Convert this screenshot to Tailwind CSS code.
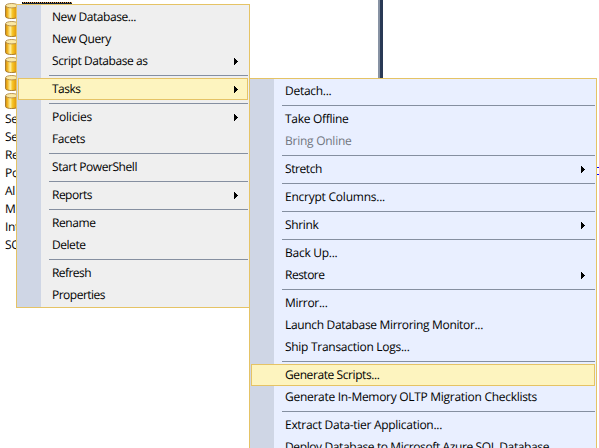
<!DOCTYPE html>
<html lang="en"><head><meta charset="utf-8"><title>Database menu</title>
<script src="https://cdn.jsdelivr.net/npm/@tailwindcss/browser@4"></script></head>
<body class="relative h-[448px] w-[599px] overflow-hidden bg-white font-['Open_Sans','Noto_Sans',sans-serif] text-[12px] text-black [text-rendering:geometricPrecision]">
<svg class="absolute h-0 w-0"><defs>
<linearGradient id="g"><stop offset="0" stop-color="#d08a10"/><stop offset=".15" stop-color="#efb21c"/><stop offset=".38" stop-color="#fff0a0"/><stop offset=".55" stop-color="#f7c628"/><stop offset="1" stop-color="#d98500"/></linearGradient>
<symbol id="db" viewBox="0 0 14 18"><path d="M.5 4v10.500c0 2.700 12.500 2.700 12.500 0V4z" fill="url(#g)" stroke="#a07428" stroke-width=".9"/><ellipse cx="6.750" cy="3.700" rx="6.200" ry="2.200" fill="#fbe9a4" stroke="#b08a48" stroke-width=".9"/></symbol>
<symbol id="ar" viewBox="0 0 4 7"><path d="M0 0h1v1h1v1h1v1h1v1H3v1H2v1H1v1H0z" shape-rendering="crispEdges"/></symbol></defs></svg>
<main class="flex h-full">
<aside class="w-[378px] pl-[5px]" id="tree"></aside>
<div class="h-full w-[2px] bg-[#8792a3]"></div><div class="h-full w-[3px] bg-[#293955]"></div>
</main>
<div class="absolute left-[22px] top-[2px] h-[2px] w-[50px] bg-[#10243c]"><div class="h-px bg-[repeating-linear-gradient(90deg,#000_0_1px,#e09a50_1px_2px)]"></div></div>
<div class="absolute left-[592px] top-[167px] h-[8px] w-[7px] border-y border-[#0000ff]"></div>
<nav id="menu" class="absolute left-[16px] top-[4px] h-[304px] w-[234px] border border-[#e5c365] bg-[linear-gradient(90deg,#cfd6e5_24px,#efefef_24px)] pt-px"></nav>
<nav id="sub" class="absolute left-[249px] top-[78px] h-[370px] w-[348px] overflow-hidden border border-b-0 border-[#e5c365] bg-[linear-gradient(90deg,#cfd6e5_24px,#e9efff_24px)] pt-px"></nav>
<script>
const arrow = '<svg class="mr-[9px] ml-auto h-[7px] w-[4px]"><use href="#ar"/></svg>';
// Each entry: label, label width, flags (a = arrow, h = highlighted, d = disabled); null is a separator
const main = [['New Database...',84],['New Query',59],['Script Database as',95.5,'a'],null,['Tasks',28.5,'ah'],null,['Policies',40,'a'],['Facets',33],null,['Start PowerShell',85],null,['Reports',40,'a'],null,['Rename',43.5],['Delete',33.5],null,['Refresh',39],['Properties',53]];
const sub = [['Detach...',46.5],null,['Take Offline',63.5],['Bring Online',66.5,'d'],null,['Stretch',37,'a'],null,['Encrypt Columns...',100],null,['Shrink',33.5,'a'],null,['Back Up...',52.5],['Restore',39.5,'a'],null,['Mirror...',42.5],['Launch Database Mirroring Monitor...',198],['Ship Transaction Logs...',124.5],null,['Generate Scripts...',94.5,'h'],['Generate In-Memory OLTP Migration Checklists',252],null,['Extract Data-tier Application...',157],['Deploy Database to Microsoft Azure SQL Database',264]];
function fill(id, rows) {
  document.getElementById(id).innerHTML = rows.map(r => {
    if (!r) return '<div class="ml-[32px] mr-px flex h-[6px] items-center"><div class="mt-px h-px w-full bg-[#858fa0]"></div></div>';
    const f = r[2] || '';
    return `<div class="mx-px flex h-[22px] items-center border pl-[33px] ${f.includes('h') ? 'border-[#e5c365] bg-[#fdf4bf]' : 'border-transparent'} ${f.includes('d') ? 'text-[#717680]' : ''}"><span class="whitespace-nowrap leading-[20px]" data-w="${r[1]}">${r[0]}</span>${f.includes('a') ? arrow : ''}</div>`;
  }).join('');
}
fill('menu', main); fill('sub', sub);
function fit() {
  document.querySelectorAll('[data-w]').forEach(e => {
    e.style.letterSpacing = '0px';
    e.style.letterSpacing = (e.dataset.w - e.getBoundingClientRect().width) / e.textContent.length + 'px';
  });
}
fit();
document.fonts.ready.then(fit);
addEventListener('load', fit);
document.getElementById('tree').innerHTML =
  '<div class="h-[2px]"></div>' + '<svg class="block h-[18px] w-[14px]"><use href="#db"/></svg>'.repeat(6) +
  ['Se','Se','Re','Po','Al','M','Int','SQ'].map(t => `<div class="h-[18px] leading-[18px] tracking-[-0.3px]">${t}</div>`).join('');
</script>
</body></html>
